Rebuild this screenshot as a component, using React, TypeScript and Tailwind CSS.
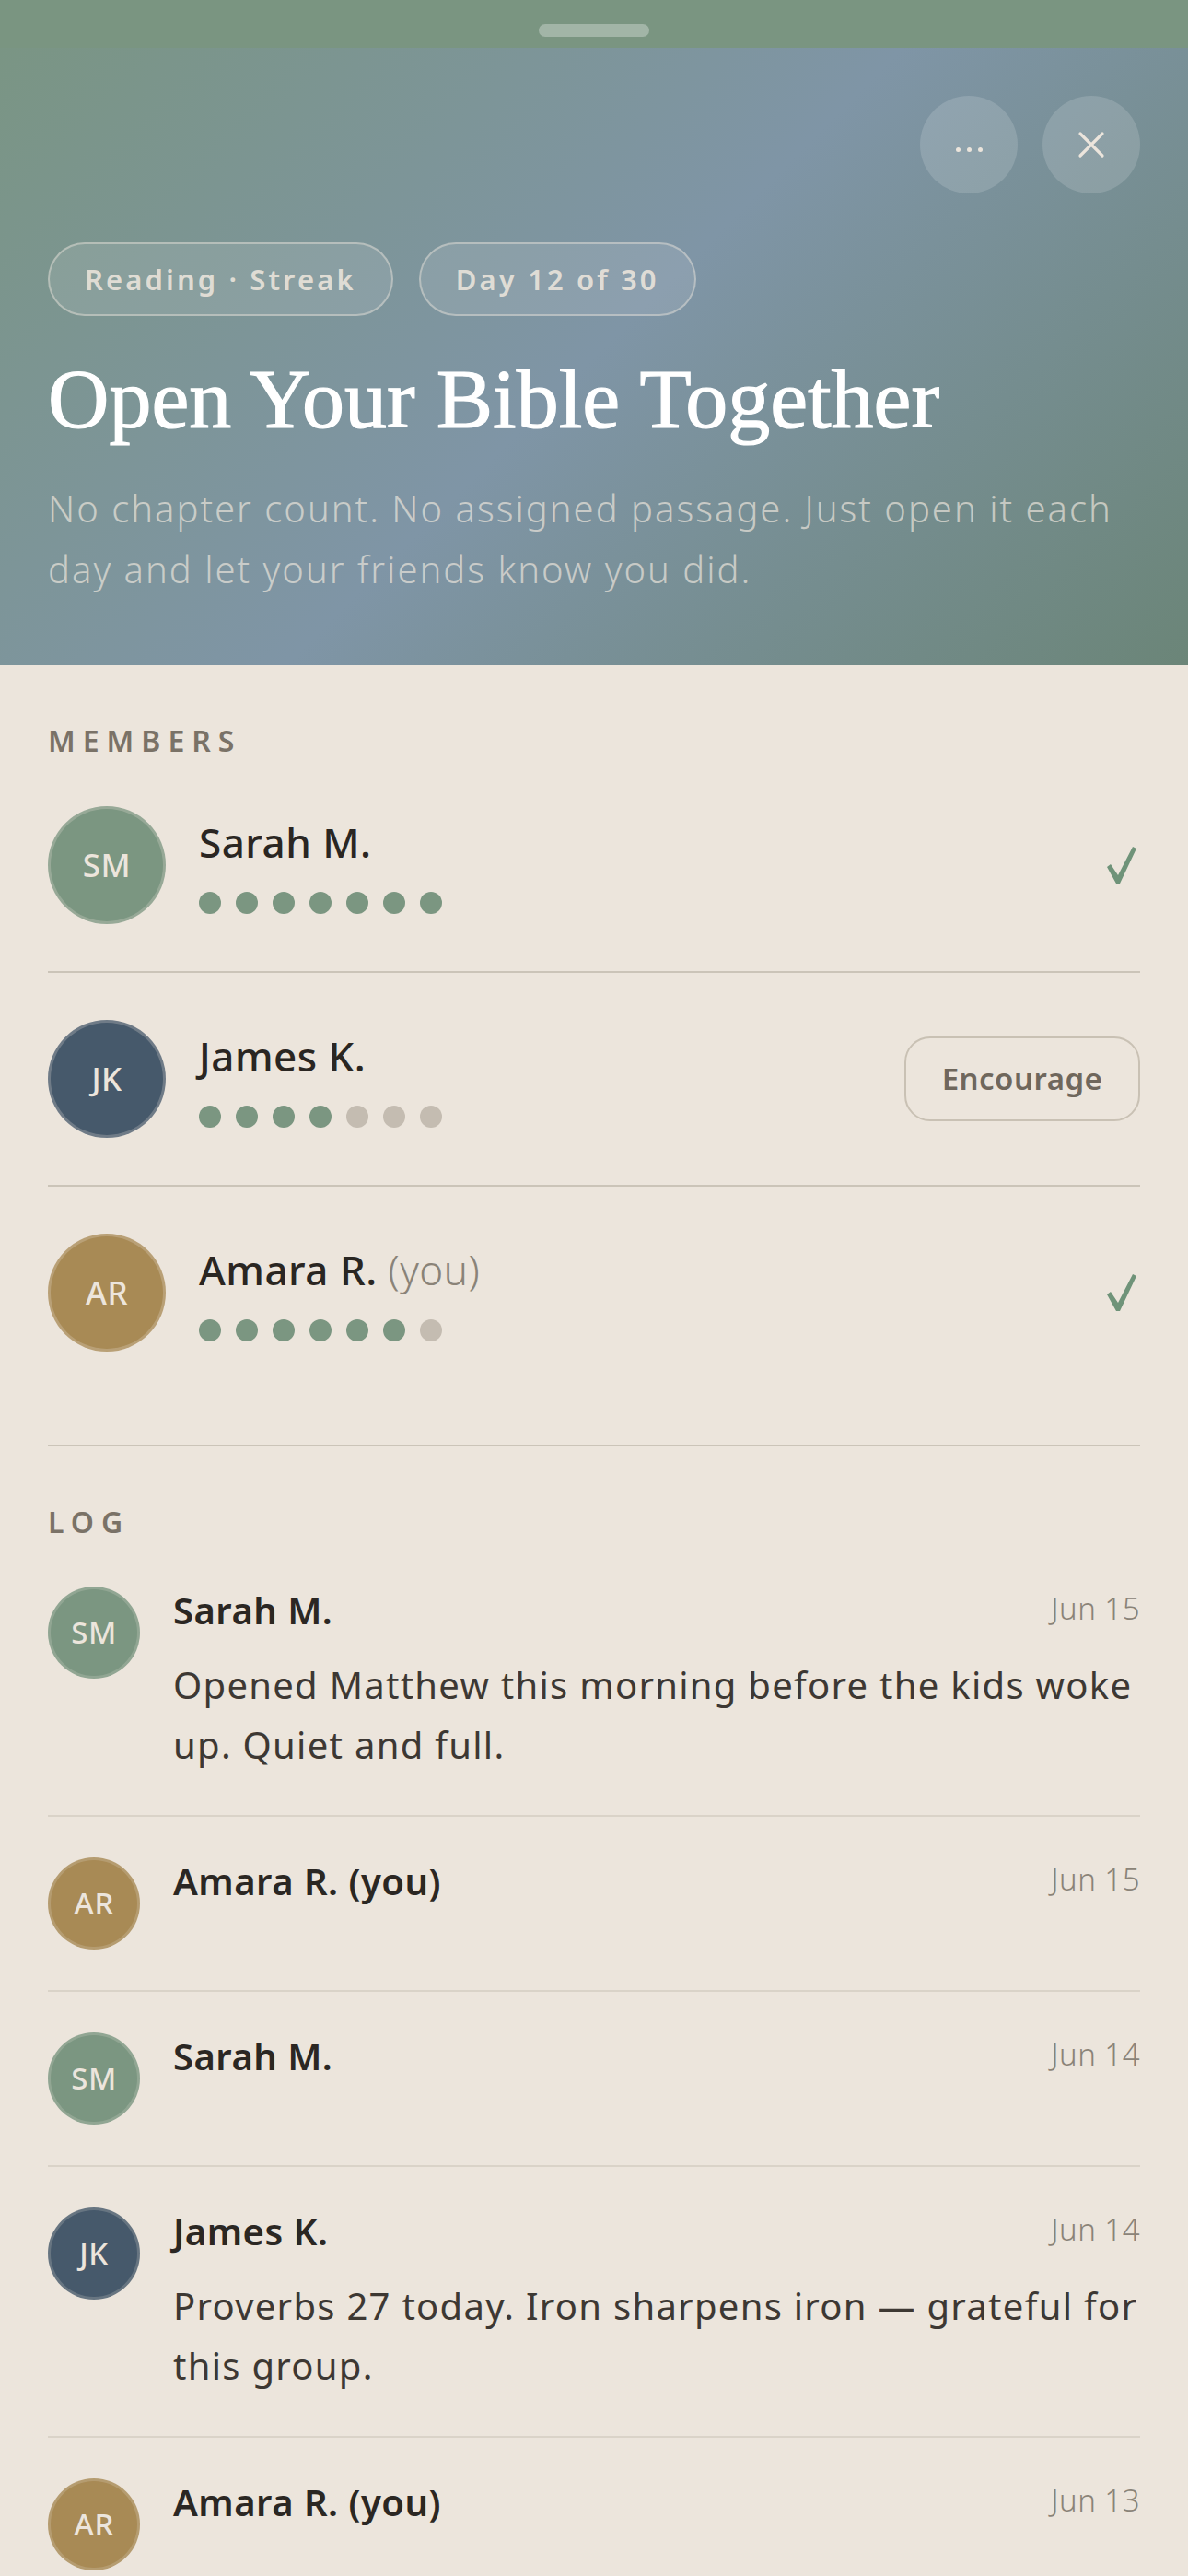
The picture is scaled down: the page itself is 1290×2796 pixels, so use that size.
import { X } from "lucide-react";

type Member = {
  initials: string;
  name: string;
  you?: boolean;
  color: string;
  streak: number;
  done: boolean;
};

type LogEntry = {
  initials: string;
  name: string;
  color: string;
  date: string;
  note?: string;
};

const members: Member[] = [
  { initials: "SM", name: "Sarah M.", color: "bg-[#7b9681]", streak: 7, done: true },
  { initials: "JK", name: "James K.", color: "bg-[#46596b]", streak: 4, done: false },
  { initials: "AR", name: "Amara R.", you: true, color: "bg-[#a88a55]", streak: 6, done: true },
];

const log: LogEntry[] = [
  {
    initials: "SM",
    name: "Sarah M.",
    color: "bg-[#7b9681]",
    date: "Jun 15",
    note: "Opened Matthew this morning before the kids woke up. Quiet and full.",
  },
  { initials: "AR", name: "Amara R. (you)", color: "bg-[#a88a55]", date: "Jun 15" },
  { initials: "SM", name: "Sarah M.", color: "bg-[#7b9681]", date: "Jun 14" },
  {
    initials: "JK",
    name: "James K.",
    color: "bg-[#46596b]",
    date: "Jun 14",
    note: "Proverbs 27 today. Iron sharpens iron — grateful for this group.",
  },
  { initials: "AR", name: "Amara R. (you)", color: "bg-[#a88a55]", date: "Jun 13" },
];

function Check() {
  return (
    <svg width="34" height="42" viewBox="0 0 34 42" className="text-[#6f9379]">
      <path d="M1 23 L5 20 L13 32 L29 1 L33 3 L15 41 L11 41 Z" fill="currentColor" />
    </svg>
  );
}

function SectionLabel({ children }: { children: string }) {
  return (
    <div className="text-[32px] leading-[40px] font-semibold uppercase tracking-[0.25em] text-[#7a7267]">
      {children}
    </div>
  );
}

function MemberRow({ m }: { m: Member }) {
  return (
    <div className="flex items-center gap-[36px] py-[51px]">
      <div
        className={`flex h-[128px] w-[128px] shrink-0 items-center justify-center rounded-full border-[3px] border-[#ece5dc]/25 ${m.color} text-[35px] font-medium text-[#ece5dc]`}
      >
        {m.initials}
      </div>
      <div className="flex-1">
        <div className="text-[44px] leading-[56px] font-medium text-[#2a2622]">
          {m.name}
          {m.you && <span className="font-light text-[#8a8378]"> (you)</span>}
        </div>
        <div className="mt-[26px] flex gap-[16px]">
          {Array.from({ length: 7 }).map((_, i) => (
            <div
              key={i}
              className={`h-[24px] w-[24px] rounded-full ${i < m.streak ? "bg-[#7b9681]" : "bg-[#c4bcb1]"}`}
            />
          ))}
        </div>
      </div>
      {m.done ? (
        <div className="pr-[3px]">
          <Check />
        </div>
      ) : (
        <button className="flex h-[92px] w-[256px] items-center justify-center rounded-[28px] border-2 border-[#c9c1b4] text-[33px] font-semibold text-[#6f675c]">
          Encourage
        </button>
      )}
    </div>
  );
}

function LogRow({ e }: { e: LogEntry }) {
  return (
    <div className="flex items-start gap-[36px] py-[44px]">
      <div
        className={`flex h-[100px] w-[100px] shrink-0 items-center justify-center rounded-full border-[3px] border-[#ece5dc]/20 ${e.color} text-[33px] font-medium text-[#ece5dc]`}
      >
        {e.initials}
      </div>
      <div className="flex-1">
        <div className="flex items-start justify-between">
          <div className="text-[40px] leading-[52px] font-semibold text-[#2b2723]">{e.name}</div>
          <div className="text-[33px] leading-[48px] font-light text-[#8a8378]">{e.date}</div>
        </div>
        {e.note && (
          <p className="mt-[22px] text-[40px] leading-[65px] tracking-[0.032em] text-[#3d3833]">
            {e.note}
          </p>
        )}
      </div>
    </div>
  );
}

export default function App() {
  return (
    <div className="h-[2796px] overflow-hidden bg-[#ece5dc] font-['Noto_Sans',sans-serif] tracking-[0.03em]">
      <div className="flex h-[52px] justify-center bg-[#7a9581] pt-[26px]">
        <div className="h-[14px] w-[120px] rounded-full bg-white/30" />
      </div>

      <header className="bg-[linear-gradient(135deg,#7a9584_0%,#7f95a6_50%,#6b8578_100%)] px-[52px] pb-[71px] pt-[52px]">
        <div className="flex justify-end gap-[27px]">
          <button className="flex h-[106px] w-[106px] items-center justify-center gap-[7px] rounded-full bg-white/15">
            <span className="mt-[10px] h-[5px] w-[5px] rounded-full bg-[#ece5dc]" />
            <span className="mt-[10px] h-[5px] w-[5px] rounded-full bg-[#ece5dc]" />
            <span className="mt-[10px] h-[5px] w-[5px] rounded-full bg-[#ece5dc]" />
          </button>
          <button className="flex h-[106px] w-[106px] items-center justify-center rounded-full bg-white/15 text-[#ece5dc]">
            <X size={48} strokeWidth={1.6} />
          </button>
        </div>

        <div className="mt-[53px] flex gap-[28px]">
          {["Reading · Streak", "Day 12 of 30"].map((t) => (
            <div
              key={t}
              className="flex h-[80px] items-center rounded-full border-2 border-[#ece5dc]/45 bg-white/10 px-[38px] text-[31px] font-semibold tracking-[0.1em] text-[#ece5dc]/90"
            >
              {t}
            </div>
          ))}
        </div>

        <h1 className="mt-[40px] font-['Liberation_Serif',serif] text-[92px] leading-[101px] tracking-normal text-white [-webkit-text-stroke:1.2px_white]">
          Open Your Bible Together
        </h1>

        <p className="mt-[35px] text-[40px] leading-[66px] font-light tracking-[0.05em] text-[#ece5dc]/70">
          No chapter count. No assigned passage. Just open it each
          <br />
          day and let your friends know you did.
        </p>
      </header>

      <section className="px-[52px] pt-[62px]">
        <SectionLabel>Members</SectionLabel>
        <div className="divide-y-2 divide-[#cbc4b8] border-b-2 border-[#cbc4b8] pb-[50px]">
          {members.map((m) => (
            <MemberRow key={m.initials} m={m} />
          ))}
        </div>
      </section>

      <section className="px-[52px] pt-[62px]">
        <div className="mb-[6px]">
          <SectionLabel>Log</SectionLabel>
        </div>
        <div className="divide-y-2 divide-[#dad3c8]">
          {log.map((e, i) => (
            <LogRow key={i} e={e} />
          ))}
        </div>
      </section>
    </div>
  );
}
